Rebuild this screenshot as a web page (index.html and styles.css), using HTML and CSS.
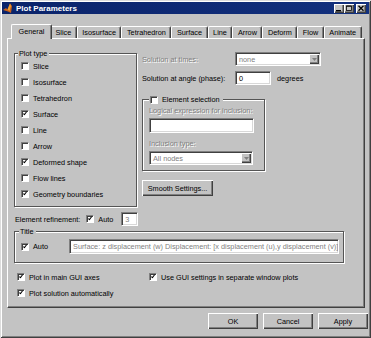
FILE: index.html
```html
<!DOCTYPE html>
<html lang="en">
<head>
	<meta charset="UTF-8">
	<meta name="viewport" content="width=device-width, initial-scale=1.0">
	<title>Plot Parameters</title>

	<link rel="stylesheet" href="styles.css">
</head>
<body>
	<div class="window">
		<!-- title bar -->
		<div class="titlebar">
			<svg class="app-icon" viewBox="0 0 9 10">
				<path d="M0 7 L3 5 L4.5 6.5 L7 0.5 L9 3 L8 10 L5 8.5 Z" fill="#c8601a"/>
				<path d="M4.5 6.5 L7 0.5 L8 3 L6.5 8 Z" fill="#f0a030"/>
			</svg>
			<span class="title">Plot Parameters</span>
			<div class="caption-buttons">
				<span class="caption-btn">
					<svg viewBox="0 0 10 9"><rect x="2" y="6" width="5" height="1.4" fill="#000"/></svg>
				</span>
				<span class="caption-btn">
					<svg viewBox="0 0 10 9"><rect x="2.5" y="2" width="5" height="4.5" fill="none" stroke="#000" stroke-width="0.8"/><rect x="2.5" y="1.6" width="5" height="1" fill="#000"/></svg>
				</span>
				<span class="caption-btn close">
					<svg viewBox="0 0 10 9"><path d="M2.5 1.8 L7.5 6.8 M7.5 1.8 L2.5 6.8" stroke="#000" stroke-width="1.3"/></svg>
				</span>
			</div>
		</div>

		<div class="dialog">
			<!-- tabs -->
			<div class="tabs">
				<span class="tab active">General</span>
				<span class="tab">Slice</span>
				<span class="tab">Isosurface</span>
				<span class="tab">Tetrahedron</span>
				<span class="tab">Surface</span>
				<span class="tab">Line</span>
				<span class="tab">Arrow</span>
				<span class="tab">Deform</span>
				<span class="tab">Flow</span>
				<span class="tab">Animate</span>
			</div>

			<div class="panel">
				<div class="panel-top">
					<fieldset class="group plot-type">
						<legend>Plot type</legend>
						<div class="check"><span class="box"></span>Slice</div>
						<div class="check"><span class="box"></span>Isosurface</div>
						<div class="check"><span class="box"></span>Tetrahedron</div>
						<div class="check"><span class="box checked"></span>Surface</div>
						<div class="check"><span class="box"></span>Line</div>
						<div class="check"><span class="box"></span>Arrow</div>
						<div class="check"><span class="box checked"></span>Deformed shape</div>
						<div class="check"><span class="box"></span>Flow lines</div>
						<div class="check"><span class="box checked"></span>Geometry boundaries</div>
					</fieldset>

					<div class="right-col">
						<div class="field-row">
							<span class="row-label disabled-text">Solution at times:</span>
							<span class="field combo combo-times">
								<span class="field-text disabled-value">none</span>
								<span class="drop-btn"><svg viewBox="0 0 5 3"><path d="M0 0 H5 L2.5 3 Z" fill="#808080"/></svg></span>
							</span>
						</div>
						<div class="field-row second">
							<span class="row-label">Solution at angle (phase):</span>
							<span class="field angle-input"><span class="field-text">0</span></span>
							<span class="unit">degrees</span>
						</div>

						<fieldset class="group element-selection">
							<legend><span class="box"></span>Element selection</legend>
							<div class="sub-label disabled-text">Logical expression for inclusion:</div>
							<div class="field expr-input"></div>
							<div class="sub-label disabled-text spaced">Inclusion type:</div>
							<span class="field combo combo-nodes">
								<span class="field-text disabled-value">All nodes</span>
								<span class="drop-btn"><svg viewBox="0 0 5 3"><path d="M0 0 H5 L2.5 3 Z" fill="#808080"/></svg></span>
							</span>
						</fieldset>

						<button class="btn smooth-btn">Smooth Settings...</button>
					</div>
				</div>

				<div class="refine">
					<span>Element refinement:</span>
					<span class="box checked"></span>
					<span>Auto</span>
					<span class="field refine-input"><span class="field-text disabled-value">3</span></span>
				</div>

				<fieldset class="group title-group">
					<legend>Title</legend>
					<div class="title-row">
						<span class="box checked"></span>
						<span>Auto</span>
						<span class="field title-input"><span class="field-text disabled-value">Surface: z displacement (w)  Displacement: [x displacement (u),y displacement (v)]</span></span>
					</div>
				</fieldset>

				<div class="options">
					<div class="check"><span class="box checked"></span>Plot in main GUI axes</div>
					<div class="check"><span class="box checked"></span>Use GUI settings in separate window plots</div>
					<div class="check"><span class="box checked"></span>Plot solution automatically</div>
				</div>
			</div>

			<!-- dialog buttons -->
			<div class="actions">
				<button class="btn">OK</button>
				<button class="btn">Cancel</button>
				<button class="btn">Apply</button>
			</div>
		</div>
	</div>
</body>
</html>
```

FILE: styles.css
```css
*,
*::before,
*::after {
	margin: 0;
	padding: 0;
	box-sizing: border-box;
}

:root {
	--face: #c3c3c3;
	--shadow: #808080;
	--dark-shadow: #404040;
	--highlight: #fff;
}

html, body {
	width: 100%;
	height: 100%;
	overflow: hidden;
}

body {
	background: var(--face);
	color: #000;
	font-family: "Liberation Sans", Arial, sans-serif;
	font-size: 7.3px;
	line-height: 9px;
}

/**
* Window frame
*/
.window {
	width: 371px;
	height: 338px;
	padding: 2px;
	display: flex;
	flex-direction: column;
	background: var(--face);
	box-shadow:
		inset 1px 1px 0 #dcdcdc,
		inset -1px -1px 0 var(--dark-shadow),
		inset 2px 2px 0 var(--highlight),
		inset -2px -2px 0 var(--shadow);
}

.titlebar {
	height: 12px;
	display: flex;
	align-items: center;
	padding: 0 3px 0 1px;
	background: linear-gradient(to right, #0a236a, #12307e);
	color: #fff;
}

.app-icon {
	width: 9px;
	height: 10px;
	margin-right: 4px;
}

.title {
	font-size: 8px;
	font-weight: bold;
}

.caption-buttons {
	margin-left: auto;
	display: flex;
}

.caption-btn {
	width: 10px;
	height: 9px;
	display: flex;
	background: var(--face);
	box-shadow:
		inset 1px 1px 0 var(--highlight),
		inset -1px -1px 0 var(--dark-shadow),
		inset -2px -2px 0 var(--shadow);
}

.caption-btn svg {
	width: 10px;
	height: 9px;
}

.caption-btn.close {
	margin-left: 2px;
}

/**
* Dialog body
*/
.dialog {
	flex: 1;
	padding: 10px 1px 0 5px;
	display: flex;
	flex-direction: column;
}

.tabs {
	height: 14px;
	margin-left: 6px;
	display: flex;
	align-items: flex-end;
}

.tab {
	height: 12px;
	padding: 0 4.5px;
	line-height: 11px;
	white-space: nowrap;
	border-top: 1px solid var(--highlight);
	border-left: 1px solid var(--highlight);
	border-right: 1px solid var(--dark-shadow);
	border-radius: 2px 2px 0 0;
	box-shadow: inset -1px 0 0 var(--shadow);
}

.tab.active {
	position: relative;
	z-index: 1;
	height: 15px;
	margin: 0 -2px -1px;
	padding: 1px 6.5px 0;
	background: var(--face);
}

.panel {
	width: 358px;
	padding: 10px 0 6px 6px;
	border-top: 1px solid var(--highlight);
	border-left: 1px solid var(--highlight);
	border-right: 1px solid var(--dark-shadow);
	border-bottom: 1px solid var(--dark-shadow);
	box-shadow: inset -1px -1px 0 var(--shadow);
}

.panel-top {
	display: flex;
	align-items: flex-start;
}

/* etched group boxes */
.group {
	border: 1px solid #555;
	box-shadow: 1px 1px 0 var(--highlight), inset 1px 1px 0 var(--highlight);
}

.group legend {
	line-height: 9px;
	padding: 0 2px 0 1px;
	background: var(--face);
}

.plot-type {
	width: 123px;
	padding: 0 0 4px 6px;
}

.plot-type legend {
	margin-left: -3px;
}

/* checkboxes */
.check {
	height: 16px;
	display: flex;
	align-items: center;
	white-space: nowrap;
}

.box {
	position: relative;
	flex: none;
	width: 8px;
	height: 8px;
	margin-right: 4px;
	background: #fff;
	border-top: 1px solid var(--shadow);
	border-left: 1px solid var(--shadow);
	border-bottom: 1px solid var(--highlight);
	border-right: 1px solid var(--highlight);
	box-shadow: inset 1px 1px 0 var(--dark-shadow);
}

.box.checked::after {
	content: "";
	position: absolute;
	left: 2px;
	top: 0;
	width: 2px;
	height: 4px;
	border: solid #000;
	border-width: 0 1.4px 1.4px 0;
	transform: rotate(38deg);
}

/* right column */
.right-col {
	margin-left: 5px;
	padding-top: 3px;
	display: flex;
	flex-direction: column;
	align-items: flex-start;
}

.field-row {
	height: 14px;
	display: flex;
	align-items: center;
	white-space: nowrap;
}

.field-row.second {
	margin-top: 5px;
}

.row-label {
	width: 93px;
}

.disabled-text,
.disabled-value {
	color: var(--shadow);
}

.disabled-text {
	text-shadow: 1px 1px 0 var(--highlight);
}

/* sunken edit fields */
.field {
	display: flex;
	align-items: center;
	height: 14px;
	overflow: hidden;
	background: #fff;
	border-top: 1px solid var(--shadow);
	border-left: 1px solid var(--shadow);
	border-bottom: 1px solid var(--highlight);
	border-right: 1px solid var(--highlight);
	box-shadow: inset 1px 1px 0 var(--dark-shadow), inset -1px -1px 0 #d8d8d8;
}

.field-text {
	padding-left: 3px;
	white-space: nowrap;
}

.combo {
	justify-content: space-between;
}

.drop-btn {
	width: 10px;
	height: 10px;
	margin-right: 1px;
	display: flex;
	align-items: center;
	justify-content: center;
	background: var(--face);
	box-shadow:
		inset 1px 1px 0 var(--highlight),
		inset -1px -1px 0 var(--dark-shadow),
		inset -2px -2px 0 var(--shadow);
}

.drop-btn svg {
	width: 5px;
	height: 3px;
}

.combo-times {
	width: 86px;
}

.angle-input {
	width: 36px;
}

.unit {
	margin-left: 6px;
}

.element-selection {
	width: 123px;
	margin-top: 10px;
	padding: 2px 10px 5px 6px;
}

.element-selection legend {
	display: flex;
	align-items: center;
	padding: 0 3px 0 1px;
}

.sub-label {
	white-space: nowrap;
}

.sub-label.spaced {
	margin-top: 6px;
}

.expr-input {
	width: 105px;
	height: 15px;
	margin-top: 3px;
}

.combo-nodes {
	width: 104px;
	margin-top: 3px;
}

/* push buttons */
.btn {
	height: 16px;
	font: inherit;
	color: #000;
	background: var(--face);
	border: 0;
	box-shadow:
		inset 1px 1px 0 var(--highlight),
		inset -1px -1px 0 var(--dark-shadow),
		inset -2px -2px 0 var(--shadow);
}

.smooth-btn {
	width: 71px;
	margin-top: 9px;
}

/* element refinement */
.refine {
	height: 14px;
	margin-top: 5px;
	padding-left: 1px;
	display: flex;
	align-items: center;
	white-space: nowrap;
}

.refine .box {
	margin-left: 6px;
}

.refine-input {
	width: 17px;
	margin-left: 8px;
}

/* title group */
.title-group {
	width: 320px;
	margin-top: 1px;
	padding: 3px 4px 8px 6px;
}

.title-group legend {
	margin-left: -2px;
}

.title-row {
	display: flex;
	align-items: center;
}

.title-input {
	flex: 1;
	min-width: 0;
	height: 15px;
	margin-left: 21px;
}

/* bottom options */
.options {
	margin-top: 6px;
	padding-left: 3px;
	display: grid;
	grid-template-columns: 132px auto;
}

.actions {
	margin-top: 5px;
	display: flex;
	justify-content: flex-end;
	gap: 5px;
}

.actions .btn {
	width: 50px;
}
```
